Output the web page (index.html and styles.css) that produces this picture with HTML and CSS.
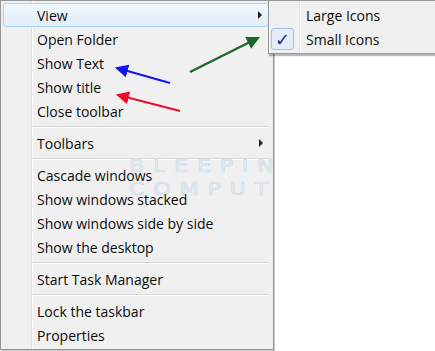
FILE: index.html
```html
<!DOCTYPE html>
<html lang="en">
<head>
    <meta charset="UTF-8">
    <title>Taskbar context menu</title>
    <link rel="stylesheet" href="styles.css">
</head>
<body>
    <div class="screen">
        <div class="menu">
            <div class="watermark">BLEEPIN<br>COMPUT</div>
            <div class="item active">View<span class="sub-arrow"></span></div>
            <div class="item">Open Folder</div>
            <div class="item">Show Text</div>
            <div class="item">Show title</div>
            <div class="item">Close toolbar</div>
            <div class="sep"></div>
            <div class="item">Toolbars<span class="sub-arrow"></span></div>
            <div class="sep"></div>
            <div class="item">Cascade windows</div>
            <div class="item">Show windows stacked</div>
            <div class="item">Show windows side by side</div>
            <div class="item">Show the desktop</div>
            <div class="sep"></div>
            <div class="item">Start Task Manager</div>
            <div class="sep"></div>
            <div class="item">Lock the taskbar</div>
            <div class="item">Properties</div>
        </div>

        <div class="submenu">
            <div class="item">Large Icons</div>
            <div class="item"><span class="check">&#10003;</span>Small Icons</div>
        </div>

        <svg class="arrows" width="435" height="351" viewBox="0 0 435 351">
            <defs>
                <marker id="head-blue" markerWidth="6" markerHeight="6" refX="5" refY="3" orient="auto" markerUnits="strokeWidth">
                    <path d="M0,0 L6,3 L0,6 Z" fill="#1414f0"/>
                </marker>
                <marker id="head-red" markerWidth="6" markerHeight="6" refX="5" refY="3" orient="auto" markerUnits="strokeWidth">
                    <path d="M0,0 L6,3 L0,6 Z" fill="#ec0d2a"/>
                </marker>
                <marker id="head-green" markerWidth="6" markerHeight="6" refX="5" refY="3" orient="auto" markerUnits="strokeWidth">
                    <path d="M0,0 L6,3 L0,6 Z" fill="#17672a"/>
                </marker>
            </defs>
            <line x1="170" y1="83" x2="117" y2="68" stroke="#1414f0" stroke-width="2.2" marker-end="url(#head-blue)"/>
            <line x1="180" y1="111" x2="118" y2="95" stroke="#ec0d2a" stroke-width="2.2" marker-end="url(#head-red)"/>
            <line x1="190" y1="72" x2="258" y2="38" stroke="#17672a" stroke-width="2.2" marker-end="url(#head-green)"/>
        </svg>
    </div>
</body>
</html>
```

FILE: styles.css
```css
*{
    margin: 0;
    padding: 0;
    box-sizing: border-box;
}
body{
    background: #fff;
    font-family: "Open Sans", "Noto Sans", sans-serif;
    font-size: 14px;
    color: #0c0c0c;
}
.screen{
    position: relative;
    width: 435px;
    height: 351px;
    overflow: hidden;
}
.menu{
    position: relative;
    width: 274px;
    height: 350px;
    padding: 2px;
    border: 1px solid #979797;
    background-color: #f0f0f0;
    background-image: linear-gradient(to right, transparent 30px, #e2e3e3 30px, #e2e3e3 31px, #fff 31px, #fff 32px, transparent 32px);
    box-shadow: 1px 1px 0 #c8c8c8;
}
.item{
    position: relative;
    height: 24px;
    line-height: 25px;
    padding-left: 34px;
    white-space: nowrap;
}
.item.active{
    width: 266px;
    border: 1px solid #a9d2ee;
    border-radius: 3px;
    padding-left: 33px;
    line-height: 23px;
    background: linear-gradient(#f1f7fd, #e3eefb);
}
.sub-arrow{
    position: absolute;
    right: 8px;
    top: 8px;
    border-left: 4px solid #222;
    border-top: 4px solid transparent;
    border-bottom: 4px solid transparent;
}
.item.active .sub-arrow{
    right: 6px;
    top: 7px;
}
.sep{
    height: 8px;
    margin-left: 30px;
    margin-right: 2px;
    background: linear-gradient(transparent 3px, #d7d7d7 3px, #d7d7d7 4px, #fff 4px, #fff 5px, transparent 5px);
}
.watermark{
    position: absolute;
    left: 128px;
    top: 153px;
    font-family: "DejaVu Sans", sans-serif;
    font-size: 18px;
    line-height: 23px;
    letter-spacing: 7px;
    color: #e6ebf2;
    -webkit-text-stroke: 0.7px #d3dcea;
    transform: scaleX(1.24);
    transform-origin: left top;
}
.submenu{
    position: absolute;
    left: 268px;
    top: 0;
    width: 172px;
    height: 54px;
    padding: 2px;
    border: 1px solid #979797;
    background-color: #f0f0f0;
    background-image: linear-gradient(to right, transparent 30px, #e2e3e3 30px, #e2e3e3 31px, #fff 31px, #fff 32px, transparent 32px);
    box-shadow: 1px 2px 1px rgba(0, 0, 0, 0.28);
}
.submenu .item{
    padding-left: 35px;
}
.check{
    position: absolute;
    left: 0;
    top: 1px;
    width: 23px;
    height: 22px;
    border: 1px solid #9fc2e8;
    border-radius: 3px;
    background: #e4edf9;
    color: #1c2b9c;
    font-family: "DejaVu Sans", sans-serif;
    font-size: 18px;
    font-weight: bold;
    line-height: 21px;
    text-align: center;
}
.arrows{
    position: absolute;
    left: 0;
    top: 0;
    pointer-events: none;
}
```
